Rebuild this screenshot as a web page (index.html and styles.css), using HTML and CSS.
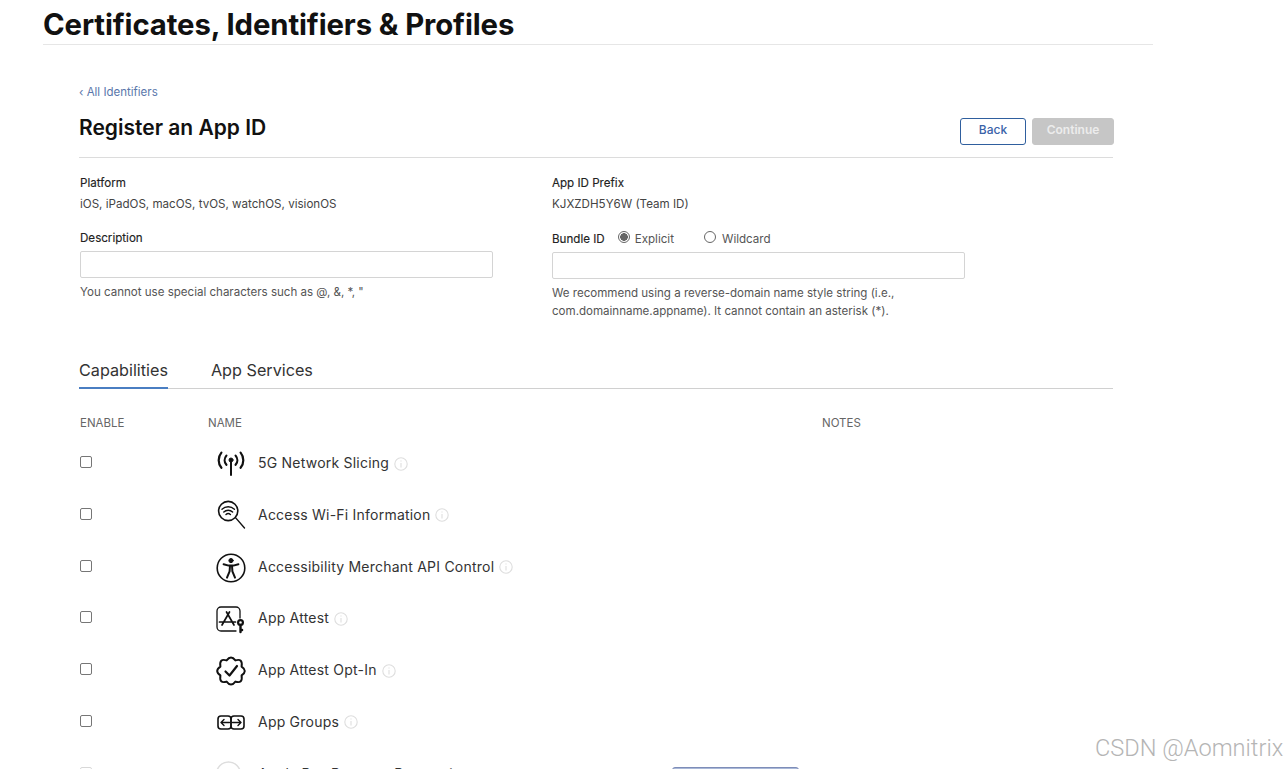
FILE: index.html
```html
<!DOCTYPE html>
<html lang="en">
<head>
<meta charset="utf-8">
<title>Register an App ID</title>
<link rel="stylesheet" href="styles.css">
</head>
<body>
<div class="page">
  <header class="top"><h1>Certificates, Identifiers &amp; Profiles</h1></header>
  <main class="main">
    <a class="crumb" href="#">‹ All Identifiers</a>
    <div class="head">
      <h2>Register an App ID</h2>
      <div class="actions">
        <button class="btn btn-back" type="button">Back</button>
        <button class="btn btn-next" type="button">Continue</button>
      </div>
    </div>
    <section class="form">
      <div class="col">
        <div class="label">Platform</div>
        <div class="value">iOS, iPadOS, macOS, tvOS, watchOS, visionOS</div>
        <div class="label label-field">Description</div>
        <input class="field" type="text">
        <p class="hint">You cannot use special characters such as @, &amp;, *, "</p>
      </div>
      <div class="col">
        <div class="label">App ID Prefix</div>
        <div class="value">KJXZDH5Y6W (Team ID)</div>
        <div class="label-row">
          <span class="label">Bundle ID</span>
          <label class="radio r1"><input type="radio" name="b" checked><span>Explicit</span></label>
          <label class="radio r2"><input type="radio" name="b"><span>Wildcard</span></label>
        </div>
        <input class="field field-b" type="text">
        <p class="hint hint-b">We recommend using a reverse-domain name style string (i.e., com.domainname.appname). It cannot contain an asterisk (*).</p>
      </div>
    </section>
    <nav class="tabs">
      <a class="tab active" href="#">Capabilities</a>
      <a class="tab" href="#">App Services</a>
    </nav>
    <div class="thead">
      <span class="th-enable">ENABLE</span>
      <span class="th-name">NAME</span>
      <span>NOTES</span>
    </div>
    <div class="rows">
      <div class="row">
        <input class="check" type="checkbox">
        <svg class="ico" viewBox="0 0 30 30"><circle cx="15" cy="12" r="2" fill="#111"/><path d="M15 12v15" stroke-width="2"/><path d="M10.400 7.600a7 7 0 0 0 0 9.200M19.600 7.600a7 7 0 0 1 0 9.200" stroke-width="2.200"/><path d="M5.400 4.600a12 12 0 0 0 0 15.200M24.600 4.600a12 12 0 0 1 0 15.200" stroke-width="2.200"/></svg>
        <span class="name">5G Network Slicing</span><svg class="info" viewBox="0 0 14 14"><circle cx="7" cy="7" r="6.2"/><path d="M7 6v4.400M7 3.400v1.200"/></svg>
      </div>
      <div class="row">
        <input class="check" type="checkbox">
        <svg class="ico" viewBox="0 0 30 30"><circle cx="12.200" cy="11" r="9.600" stroke-width="1.600"/><path d="M19.500 17.600l9 10.400" stroke-width="1.400"/><path d="M6 9.200a9 9 0 0 1 12.400 0M7.800 12a6.400 6.400 0 0 1 8.800 0M10 14.600a3.200 3.200 0 0 1 4.400 0" stroke-width="1.400"/></svg>
        <span class="name">Access Wi-Fi Information</span><svg class="info" viewBox="0 0 14 14"><circle cx="7" cy="7" r="6.2"/><path d="M7 6v4.400M7 3.400v1.200"/></svg>
      </div>
      <div class="row">
        <input class="check" type="checkbox">
        <svg class="ico" viewBox="0 0 30 30"><circle cx="15" cy="16" r="13.800" stroke-width="1.600"/><circle cx="15" cy="8.600" r="2.100" fill="#111"/><path d="M7.600 12.200l5 1.400h4.800l5-1.400M14 13.800l-.4 5.600-2.600 6.200M16 13.800l.4 5.600 2.600 6.200" stroke-width="2"/></svg>
        <span class="name">Accessibility Merchant API Control</span><svg class="info" viewBox="0 0 14 14"><circle cx="7" cy="7" r="6.2"/><path d="M7 6v4.400M7 3.400v1.200"/></svg>
      </div>
      <div class="row">
        <input class="check" type="checkbox">
        <svg class="ico" viewBox="0 0 30 30"><path d="M24 15V8a4 4 0 0 0-4-4H5a4 4 0 0 0-4 4v16a4 4 0 0 0 4 4h15" stroke-width="1.300"/><path d="M10.500 9l7.500 13M13.500 9L6 22M3.500 19h16" stroke-width="1.700"/><circle cx="24.500" cy="19.500" r="2.400" stroke-width="2.200"/><path d="M24.500 22v7M24.500 27h1.600" stroke-width="2.400"/></svg>
        <span class="name">App Attest</span><svg class="info" viewBox="0 0 14 14"><circle cx="7" cy="7" r="6.2"/><path d="M7 6v4.400M7 3.400v1.200"/></svg>
      </div>
      <div class="row">
        <input class="check" type="checkbox">
        <svg class="ico" viewBox="0 0 30 30"><path d="M10.600 5.400Q15-.4 19.400 5.400Q27 3 25.600 11.600Q32 16 25.600 20.400Q27 29 19.400 26.600Q15 32.400 10.600 26.600Q3 29 4.400 20.400Q-2 16 4.400 11.600Q3 3 10.600 5.400Z" stroke-width="2"/><path d="M9.500 16.500l4 4 7.500-9.500" stroke-width="2.200"/></svg>
        <span class="name">App Attest Opt-In</span><svg class="info" viewBox="0 0 14 14"><circle cx="7" cy="7" r="6.2"/><path d="M7 6v4.400M7 3.400v1.200"/></svg>
      </div>
      <div class="row">
        <input class="check" type="checkbox">
        <svg class="ico" viewBox="0 0 30 30"><rect x="2" y="9" width="13" height="13" rx="3" stroke-width="1.600"/><rect x="15" y="9" width="13" height="13" rx="3" stroke-width="1.600"/><path d="M5 15.500h8.500M8 12.500l-3 3 3 3M25 15.500h-8.500M22 12.500l3 3-3 3" stroke-width="1.400"/></svg>
        <span class="name">App Groups</span><svg class="info" viewBox="0 0 14 14"><circle cx="7" cy="7" r="6.2"/><path d="M7 6v4.400M7 3.400v1.200"/></svg>
      </div>
      <div class="row row-last">
        <input class="check" type="checkbox">
        <svg class="ico ico-faint" viewBox="0 0 30 30"><circle cx="12.500" cy="15" r="12" stroke-width="1.500"/></svg>
        <span class="name">Apple Pay Payment Processing</span>
        <button class="edit" type="button">Edit</button>
      </div>
    </div>
  </main>
  <div class="mark">CSDN @Aomnitrix</div>
</div>
</body>
</html>
```
FILE: styles.css
```css
html, body { margin: 0; padding: 0; background: #fff; overflow: hidden; }
.page { position: relative; width: 1287px; height: 769px; overflow: hidden; font-family: Inter, "Noto Sans", sans-serif; color: #333; }

.top { margin-left: 43px; width: 1110px; height: 44px; border-bottom: 1px solid #e6e6e6; box-sizing: content-box; }
.top h1 { margin: 0; font-size: 29.3px; line-height: 50px; font-weight: 700; color: #111; letter-spacing: -0.1px; white-space: nowrap; }

.main { margin-left: 79px; width: 1034px; }
.crumb { display: block; margin-top: 40px; height: 14px; font-size: 11.5px; line-height: 14px; color: #5a77ab; text-decoration: none; }

.head { display: flex; justify-content: space-between; height: 58px; border-bottom: 1px solid #dcdcdc; }
.head h2 { margin: 15.5px 0 0; font-size: 21px; line-height: 26px; font-weight: 600; color: #111; }
.actions { display: flex; gap: 6px; margin-top: 19px; margin-right: -1px; height: 27px; }
.btn { box-sizing: border-box; height: 27px; font-family: inherit; font-size: 12px; font-weight: 500; border-radius: 3px; padding: 0 0 4px; }
.btn-back { width: 66px; background: #fff; border: 1px solid #2f5f9e; color: #3a62a8; }
.btn-next { width: 82px; background: #c6c6c6; border: 1px solid #c6c6c6; color: #ececec; font-weight: 600; }

.form { display: flex; padding-top: 18px; }
.col { width: 472px; }
.label { font-size: 11.6px; line-height: 14px; font-weight: 400; color: #222; padding-left: 1px; -webkit-text-stroke: 0.15px #222; }
.value { margin-top: 7px; font-size: 11.6px; line-height: 14px; color: #444; padding-left: 1px; }
.label-field { margin-top: 20px; }
.field { display: block; box-sizing: border-box; width: 413px; height: 27px; margin: 6px 0 0 1px; border: 1px solid #d4d4d4; border-radius: 2px; background: #fff; padding: 0; }
.hint { margin: 7px 0 0 1px; font-size: 11.55px; line-height: 14px; color: #555; }

.label-row { display: flex; align-items: center; margin-top: 21px; height: 14px; }
.radio { display: flex; align-items: center; font-size: 11.6px; color: #555; }
.radio input { appearance: none; box-sizing: border-box; width: 12px; height: 12px; margin: -4px 5px 0 0; border: 1px solid #666; border-radius: 50%; background: #fff; }
.radio input:checked { background: radial-gradient(circle, #666 0 3.6px, #fff 4px); }
.r1 { margin-left: 13px; }
.r2 { margin-left: 30px; }
.r2 input { margin-right: 6px; }
.field-b { margin-top: 6px; }
.hint-b { margin-top: 5px; width: 390px; line-height: 18px; color: #555; }

.tabs { display: flex; gap: 43px; margin-top: 34px; height: 34px; border-bottom: 1px solid #d0d0d0; }
.tab { font-size: 16.2px; line-height: 32px; color: #333; text-decoration: none; }
.tab.active { border-bottom: 2px solid #4a7ec2; height: 33px; }

.thead { display: flex; margin-top: 26.5px; height: 14px; font-size: 11.5px; line-height: 14px; color: #666; }
.th-enable { width: 128px; padding-left: 1px; }
.th-name { width: 614px; }

.rows { margin-top: 7.75px; }
.row { display: flex; align-items: center; height: 51.75px; }
.check { appearance: none; box-sizing: border-box; width: 12px; height: 12px; margin: -2px 0 0 1px; border: 1px solid #767676; border-radius: 2px; background: #fff; }
.row-last .check { border-color: #d8d8d8; }
.ico { width: 30px; height: 30px; margin-left: 124px; fill: none; stroke: #111; stroke-linecap: round; stroke-linejoin: round; overflow: visible; flex: none; }
.ico-faint { stroke: #ddd; }
.name { margin-left: 12px; font-size: 14px; line-height: 18px; color: #333; letter-spacing: 0.22px; white-space: nowrap; }
.info { width: 14px; height: 14px; margin: 1px 0 0 5px; fill: none; stroke: #dedede; stroke-width: 1.1; flex: none; }
.edit { align-self: flex-start; margin: 19px 314px 0 auto; width: 127px; height: 28px; flex: none; border: 1px solid #7e8db8; border-radius: 3px; background: #a9b8d8; color: #fff; font-family: inherit; font-size: 11px; }

.mark { position: absolute; left: 1095px; top: 733px; font-family: Roboto, "Liberation Sans", sans-serif; font-weight: 300; font-size: 23.6px; line-height: 30px; color: #b5b5b5; white-space: nowrap; }
```
